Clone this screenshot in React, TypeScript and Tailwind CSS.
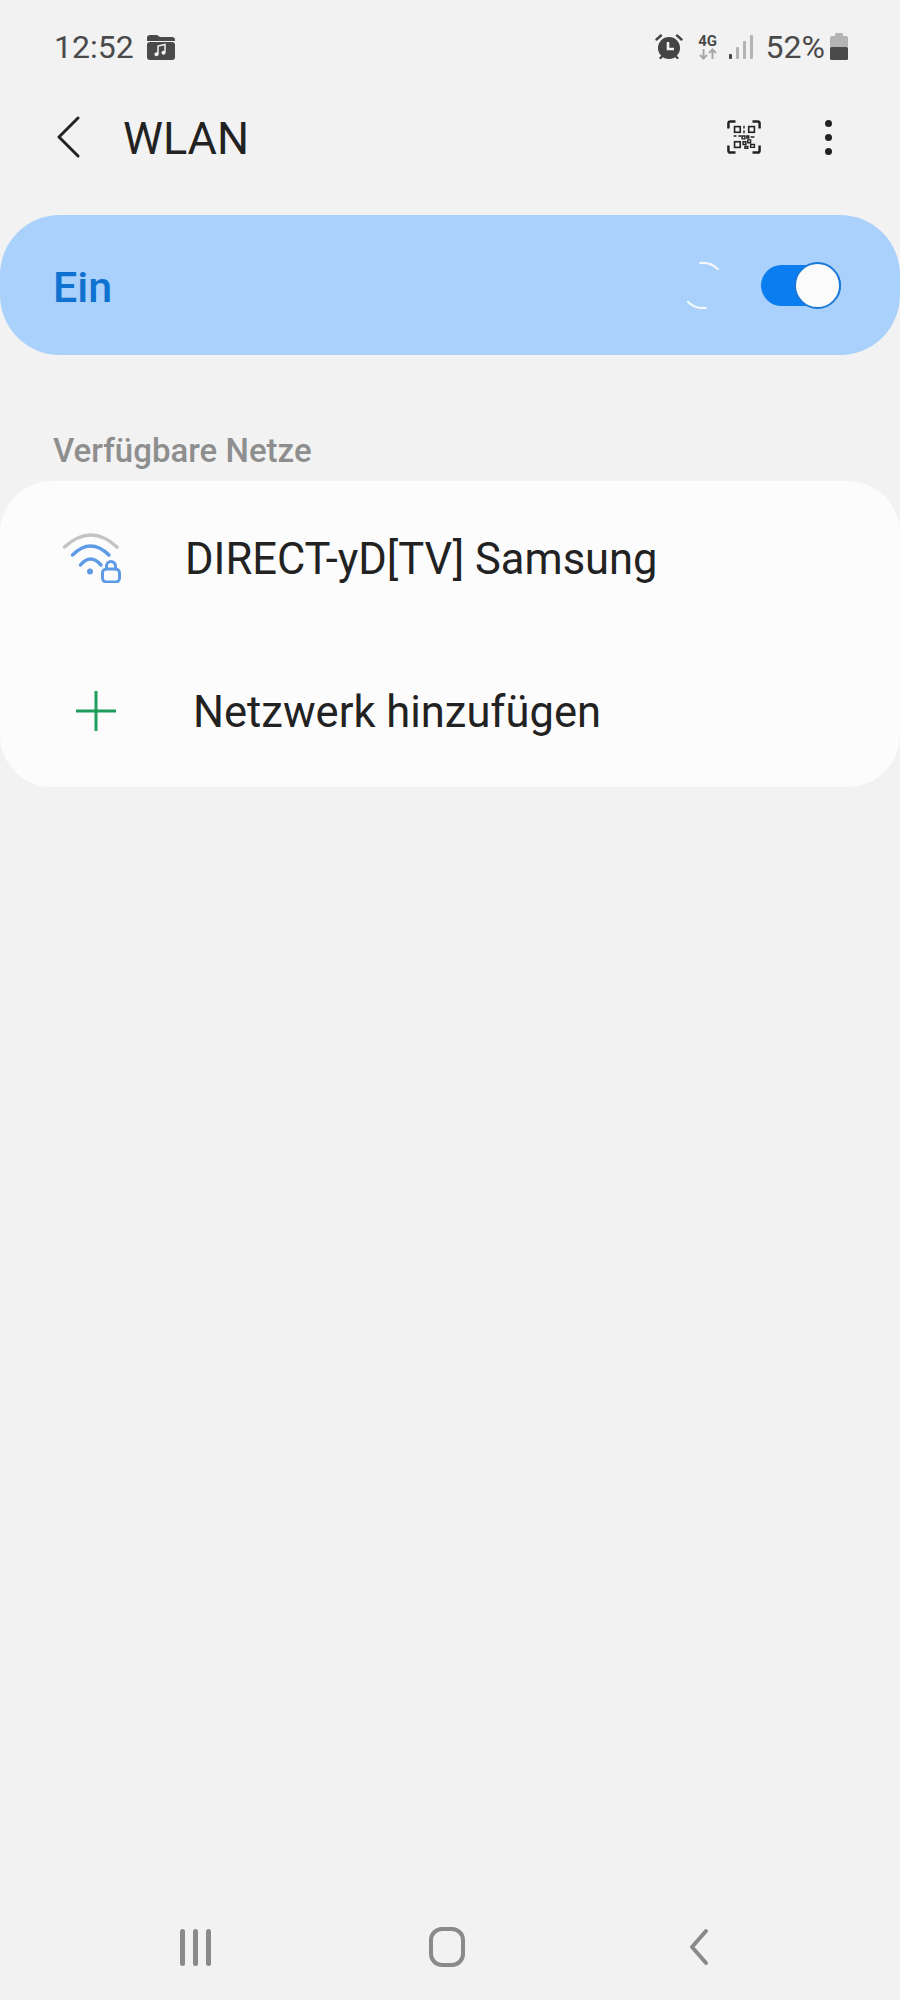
const sans = { fontFamily: "Roboto, 'Liberation Sans', sans-serif" };

function FolderMusic() {
  return (
    <svg width="30" height="28" viewBox="0 0 30 28" className="mt-[1px] ml-[12px]">
      <path d="M1 5a3 3 0 0 1 3-3h7l3 2h12a3 3 0 0 1 3 3v1H1z" fill="#4a4a4a" />
      <rect x="1" y="9" width="28" height="18" rx="3" fill="#4a4a4a" />
      <path d="M12 21v-8l7-1.500v8" fill="none" stroke="#f2f2f2" strokeWidth="1.500" />
      <circle cx="10.500" cy="21.200" r="2" fill="#f2f2f2" />
      <circle cx="17.500" cy="19.800" r="2" fill="#f2f2f2" />
    </svg>
  );
}

function StatusIcons() {
  return (
    <div className="flex items-center">
      {/* alarm */}
      <svg width="28" height="28" viewBox="0 0 28 28">
        <circle cx="14" cy="15" r="11" fill="#444" />
        <path d="M1.500 6.500 6 2.500M26.500 6.500 22 2.500M5.500 25l2-2M22.500 25l-2-2" stroke="#444" strokeWidth="2.400" strokeLinecap="round" />
        <path d="M13 9v7h6" fill="none" stroke="#f2f2f2" strokeWidth="2.600" />
      </svg>
      {/* 4G */}
      <div className="ml-[15px] flex w-[20px] flex-col items-center">
        <span className="text-[15px] leading-[14px] font-bold text-[#4a4a4a]" style={sans}>4G</span>
        <svg width="20" height="12" viewBox="0 0 20 12">
          <path d="M5.500 1v9M2 7l3.500 3.500L9 7" fill="none" stroke="#a8a8a8" strokeWidth="2" />
          <path d="M14.500 11V2M11 5l3.500-3.500L18 5" fill="none" stroke="#a8a8a8" strokeWidth="2" />
        </svg>
      </div>
      {/* signal */}
      <svg width="24" height="26" viewBox="0 0 24 26" className="ml-[11px]">
        <rect x="0" y="20" width="3" height="5" rx="1" fill="#444" />
        <rect x="7" y="13" width="3" height="12" rx="1" fill="#b4b4b4" />
        <rect x="14" y="7" width="3" height="18" rx="1" fill="#b4b4b4" />
        <rect x="21" y="1" width="3" height="24" rx="1" fill="#b4b4b4" />
      </svg>
      <span className="ml-[13px] text-[32px] leading-[38px] text-[#4a4a4a]" style={sans}>52%</span>
      {/* battery */}
      <svg width="18" height="27" viewBox="0 0 18 27" className="ml-[5px]">
        <rect x="5" y="0" width="8" height="4" rx="1" fill="#b4b4b4" />
        <rect x="0" y="3" width="18" height="12" rx="1.500" fill="#b4b4b4" />
        <rect x="0" y="14" width="18" height="13" rx="1.500" fill="#4a4a4a" />
      </svg>
    </div>
  );
}

function QrIcon() {
  return (
    <svg width="34" height="34" viewBox="0 0 36 36" fill="none" stroke="#222" strokeWidth="1.700">
      <path d="M1.500 9V3.500a2 2 0 0 1 2-2H9M27 1.500h5.500a2 2 0 0 1 2 2V9M34.500 27v5.500a2 2 0 0 1-2 2H27M9 34.500H3.500a2 2 0 0 1-2-2V27" strokeWidth="2.600" />
      <rect x="8" y="7" width="6" height="6" />
      <rect x="23" y="7" width="6" height="6" />
      <rect x="8" y="23" width="6" height="6" />
      <path d="M18 6v3M18 11v3M7 17h3M12 17h3M16 17h3v3h-3zM21 17h2v2h-2zM25 18h4M17 23h3v3h-3zM22 21h3v3h-3zM19 28h3v2h-3zM25 26h4v3h-4z" strokeWidth="1.500" />
    </svg>
  );
}

function Spinner() {
  return (
    <svg width="34" height="48" viewBox="0 0 34 48" fill="none" stroke="#f4f8fd" strokeWidth="2.200" strokeLinecap="round">
      <path d="M14 2A23 23 0 0 1 32 8" />
      <path d="M2 41A23 23 0 0 0 20 47" />
    </svg>
  );
}

function WifiLock() {
  return (
    <svg width="62" height="50" viewBox="0 0 62 50" fill="none" strokeLinecap="round">
      <path d="M3.500 14Q30-10 56 14" stroke="#c4c4c4" strokeWidth="3.500" />
      <path d="M11.500 22Q29.500 4 48 22" stroke="#5e9be6" strokeWidth="3.500" />
      <path d="M19.500 32Q29.500 20 40 32" stroke="#5e9be6" strokeWidth="3.500" />
      <circle cx="29" cy="38.500" r="3" fill="#5e9be6" />
      <rect x="41.500" y="36" width="17" height="13" rx="4" stroke="#5e9be6" strokeWidth="3" />
      <path d="M45.500 36v-3a4.500 4.500 0 0 1 9 0v3" stroke="#5e9be6" strokeWidth="3" />
    </svg>
  );
}

function PlusIcon() {
  return (
    <svg width="40" height="40" viewBox="0 0 40 40" fill="none" stroke="#1f9d5c" strokeWidth="3" strokeLinecap="round">
      <path d="M20 1v38M1 20h38" />
    </svg>
  );
}

export default function App() {
  return (
    <div className="flex h-[2000px] w-[900px] flex-col overflow-hidden bg-[#f2f2f2]" style={sans}>
      {/* status bar */}
      <div className="flex h-[95px] items-center justify-between pr-[52px] pb-[2px] pl-[54px]">
        <div className="flex items-center">
          <span className="text-[32px] leading-[38px] text-[#4a4a4a]">12:52</span>
          <FolderMusic />
        </div>
        <StatusIcons />
      </div>

      {/* title row */}
      <div className="flex h-[84px] items-center pr-[68px] pl-[57px]">
        <svg width="24" height="42" viewBox="0 0 24 42" fill="none" stroke="#222" strokeWidth="3" strokeLinecap="round" strokeLinejoin="round">
          <path d="M21 2 2 21l19 19" />
        </svg>
        <span className="mt-[3px] ml-[42px] text-[45px] leading-[52px] text-[#222]">WLAN</span>
        <div className="ml-auto flex items-center">
          <QrIcon />
          <div className="ml-[64px] flex flex-col gap-[7px]">
            <span className="h-[7px] w-[7px] rounded-full bg-[#222]" />
            <span className="h-[7px] w-[7px] rounded-full bg-[#222]" />
            <span className="h-[7px] w-[7px] rounded-full bg-[#222]" />
          </div>
        </div>
      </div>

      {/* toggle bar */}
      <div className="mt-[36px] flex h-[140px] items-center rounded-[60px] bg-[#a9d1fb] pr-[59px] pl-[53px]">
        <span className="mt-[4px] text-[43px] leading-[48px] font-medium text-[#0f72d0]">Ein</span>
        <div className="ml-auto flex items-center">
          <Spinner />
          <div className="relative ml-[41px] h-[41px] w-[80px] rounded-full bg-[#0a7ef0]">
            <div className="absolute top-[-3px] right-0 h-[47px] w-[47px] rounded-full border-2 border-[#1c78d8] bg-[#fbfbfb]" />
          </div>
        </div>
      </div>

      <div className="mt-[77px] pl-[53px] text-[33px] leading-[38px] font-medium text-[#8e8e8e]">Verfügbare Netze</div>

      {/* list */}
      <div className="mt-[11px] flex h-[306px] flex-col rounded-[52px] bg-[#fcfcfc]">
        <div className="flex h-[153px] items-center pl-[61px]">
          <WifiLock />
          <span className="mt-[5px] ml-[62px] text-[43.500px] leading-[50px] text-[#222]">DIRECT-yD[TV] Samsung</span>
        </div>
        <div className="flex h-[153px] items-center pl-[76px]">
          <PlusIcon />
          <span className="mt-[5px] ml-[77px] text-[43.500px] leading-[50px] text-[#222]">Netzwerk hinzufügen</span>
        </div>
      </div>

      {/* nav bar */}
      <div className="mt-auto flex h-[116px] items-start pt-[43px] pl-[180px]">
        <div className="mt-[2px] flex gap-[8px]">
          <span className="h-[37px] w-[5px] rounded-full bg-[#8a8a8a]" />
          <span className="h-[37px] w-[5px] rounded-full bg-[#8a8a8a]" />
          <span className="h-[37px] w-[5px] rounded-full bg-[#8a8a8a]" />
        </div>
        <div className="ml-[218px] h-[40px] w-[36px] rounded-[13px] border-[4px] border-[#8a8a8a]" />
        <svg width="20" height="38" viewBox="0 0 20 38" fill="none" stroke="#8a8a8a" strokeWidth="4" strokeLinecap="round" strokeLinejoin="round" className="mt-[1px] ml-[224px]">
          <path d="M17 3 3 19l14 16" />
        </svg>
      </div>
    </div>
  );
}
